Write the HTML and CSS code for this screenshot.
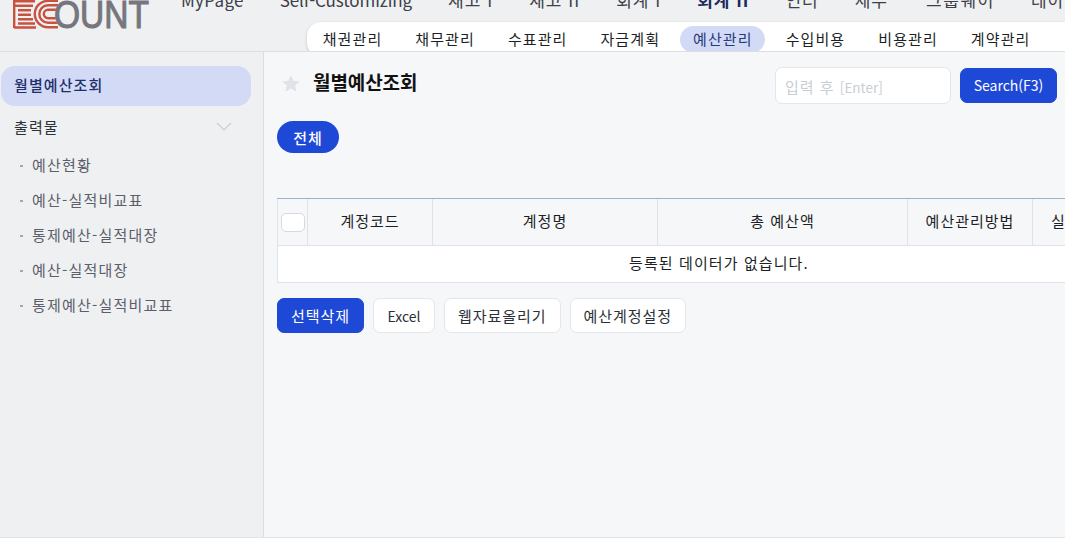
FILE: index.html
```html
<!DOCTYPE html>
<html lang="ko">
<head>
<meta charset="utf-8">
<title>월별예산조회</title>
<link rel="stylesheet" href="styles.css">
</head>
<body>
<div class="page">
  <header class="header">
    <svg class="logo" width="150" height="29" viewBox="0 0 150 29" aria-label="ECOUNT">
      <g fill="none" stroke="#c9523f" stroke-width="2.4">
        <path d="M14.2 28V0"/>
        <path d="M14 1.2H35M14 5.7H33M18 10.2H31M18 14.7H31M18 19.2H33M18 23.5H35M14 27.5H36"/>
        <path d="M58 27.2H48A13.2 13.2 0 0 1 48 0.8H58"/>
        <path d="M58 22.7H48A8.7 8.7 0 0 1 48 5.3H58"/>
        <path d="M58 18.2H48A4.2 4.2 0 0 1 48 9.8H58"/>
      </g>
      <text class="logo-text" x="54" y="28" textLength="95" lengthAdjust="spacingAndGlyphs">OUNT</text>
    </svg>
    <div class="nav-area">
      <nav class="main-nav">
        <span class="mypage">MyPage</span><span class="custom">Self-Customizing</span><span class="ko">재고 I</span><span class="ko">재고 II</span><span class="ko">회계 I</span><span class="ko on">회계 II</span><span class="ko">인터</span><span class="ko">세무</span><span class="ko wide">그룹웨어</span><span class="ko">데이터</span>
      </nav>
      <nav class="sub-nav">
        <span class="sub">채권관리</span><span class="sub">채무관리</span><span class="sub">수표관리</span><span class="sub">자금계획</span><span class="sub active">예산관리</span><span class="sub">수입비용</span><span class="sub">비용관리</span><span class="sub">계약관리</span><span class="sub">부가세</span>
      </nav>
    </div>
  </header>
  <div class="body">
    <aside class="side">
      <div class="side-active">월별예산조회</div>
      <div class="side-group"><span>출력물</span>
        <svg width="16" height="9" viewBox="0 0 16 9"><path d="M1 1l7 7 7-7" fill="none" stroke="#c9ced6" stroke-width="1.2"/></svg>
      </div>
      <ul class="side-list">
        <li>예산현황</li>
        <li>예산-실적비교표</li>
        <li>통제예산-실적대장</li>
        <li>예산-실적대장</li>
        <li>통제예산-실적비교표</li>
      </ul>
    </aside>
    <main class="main">
      <div class="title-row">
        <svg class="star" width="18" height="17" viewBox="0 0 18 17"><path d="M9 0l2.6 5.7 6.2.7-4.6 4.2 1.3 6.1L9 13.6l-5.5 3.1 1.3-6.1L.2 6.4l6.2-.7z" fill="#dfe2e7"/></svg>
        <h1 class="title">월별예산조회</h1>
        <div class="search">
          <div class="search-input">입력 후 <span class="hint">[Enter]</span></div>
          <button class="btn primary search-btn">Search(F3)</button>
        </div>
      </div>
      <button class="pill">전체</button>
      <div class="table">
        <div class="row head">
          <div class="cell c0"><span class="check"></span></div>
          <div class="cell c1">계정코드</div>
          <div class="cell c2">계정명</div>
          <div class="cell c3">총 예산액</div>
          <div class="cell c4">예산관리방법</div>
          <div class="cell c5">실적</div>
        </div>
        <div class="empty">등록된 데이터가 없습니다.</div>
      </div>
      <div class="actions">
        <button class="btn primary">선택삭제</button>
        <button class="btn latin">Excel</button>
        <button class="btn">웹자료올리기</button>
        <button class="btn">예산계정설정</button>
      </div>
    </main>
  </div>
</div>
</body>
</html>
```
FILE: styles.css
```css
* { box-sizing: border-box; }
html, body { margin: 0; height: 100%; overflow: hidden; background: #f6f7f9; }
body, button { font-family: "Noto Sans CJK KR", "Noto Sans", sans-serif; font-size: 15px; color: #1c1f26; }
.page { width: 1065px; height: 538px; display: flex; flex-direction: column; border-bottom: 1px solid #dfe2e7; }
.header { height: 52px; flex: none; display: flex; background: #eff0f2; border-bottom: 1px solid #dcdee2; overflow: hidden; }
.logo { flex: none; }
.logo-text { font-family: "Liberation Sans", sans-serif; font-size: 39px; fill: #77757d; stroke: #77757d; stroke-width: 1.1; }
.nav-area { flex: 1; min-width: 0; }
.main-nav { height: 22px; display: flex; gap: 36px; margin-top: -12px; padding-left: 31px; white-space: nowrap; font-size: 17px; line-height: 24px; color: #3c4048; }
.main-nav span { flex: none; }
.main-nav .mypage { letter-spacing: .3px; }
.main-nav .custom { letter-spacing: -.1px; }
.main-nav .ko { letter-spacing: 1px; }
.main-nav .on { font-weight: 700; color: #1c2a5c; }
.main-nav .wide { letter-spacing: 1.6px; margin-left: 2px; }
.sub-nav { margin: 12px 0 0 157px; height: 35px; display: flex; align-items: center; padding-left: 3px; gap: 7.6px; background: #fff; border-radius: 14px 0 0 14px; box-shadow: 0 1px 3px rgba(0,0,0,.2); white-space: nowrap; }
.sub { flex: none; width: 85px; height: 27px; line-height: 25px; text-align: center; border-radius: 14px; letter-spacing: 1.1px; }
.sub.active { background: #d3daf6; color: #273a7c; }
.body { flex: 1; display: flex; min-height: 0; }
.side { width: 264px; flex: none; background: #eff0f2; border-right: 1px solid #dcdee2; padding: 14px 12px 0 1px; }
.side-active { height: 40px; line-height: 37px; padding-left: 13px; background: #d3daf6; border-radius: 14px; color: #1f2f6d; font-weight: 500; letter-spacing: 1.1px; }
.side-group { display: flex; justify-content: space-between; align-items: center; height: 35px; margin-top: 3px; padding: 0 19px 0 13px; letter-spacing: 1.1px; color: #2c3038; }
.side-list { list-style: none; margin: 4px 0 0; padding: 0 0 0 31px; color: #5a5f6a; letter-spacing: 1.2px; }
.side-list li { height: 35px; line-height: 33px; position: relative; }
.side-list li::before { content: ""; position: absolute; left: -12px; top: 17px; width: 3px; height: 2px; background: #a5a8b0; }
.main { flex: 1; min-width: 0; padding: 0 0 0 13px; overflow: hidden; }
.title-row { display: flex; align-items: center; height: 38px; margin-top: 15px; padding: 0 8px 0 5px; }
.star { flex: none; margin-top: -6px; }
.title { margin: -8px 0 0 13px; font-size: 19px; font-weight: 700; color: #111; line-height: 32px; letter-spacing: -.1px; }
.search { margin-left: auto; margin-top: -2px; display: flex; gap: 9px; align-items: center; }
.search-input { width: 176px; height: 37px; line-height: 37px; padding-left: 9px; background: #fff; border: 1px solid #e3e6ea; border-radius: 7px; color: #c9ced4; letter-spacing: 1px; }
.hint { font-size: 13.5px; letter-spacing: 0; }
.btn { height: 35px; padding: 0 13px; border: 1px solid #e3e6ea; border-radius: 7px; background: #fff; color: #2c3038; cursor: pointer; letter-spacing: .95px; }
.btn.latin { font-size: 14px; letter-spacing: 0; padding: 0 13.5px; }
.btn.primary { background: #1e48d6; border-color: #1e48d6; color: #fff; }
.search-btn { width: 97px; padding: 0; letter-spacing: 0; font-size: 14px; }
.pill { display: block; margin-top: 16px; width: 62px; height: 32px; border: 0; border-radius: 16px; background: #1e48d6; color: #fff; font-weight: 500; letter-spacing: .95px; padding: 0; }
.table { margin-top: 45px; width: 820px; border-top: 1px solid #9fb1c8; }
.row { display: flex; height: 47px; border-bottom: 1px solid #dfe2e7; }
.cell { flex: none; display: flex; align-items: center; justify-content: center; border-left: 1px solid #dfe2e7; letter-spacing: 1px; padding-bottom: 3px; white-space: nowrap; }
.c0 { width: 30px; } .c1 { width: 125px; } .c2 { width: 225px; } .c3 { width: 250px; } .c4 { width: 125px; } .c5 { width: 65px; justify-content: flex-start; padding-left: 18px; }
.check { width: 24px; height: 19px; background: #fff; border: 1px solid #d6d9de; border-radius: 5px; margin-top: 3px; }
.empty { height: 37px; line-height: 34px; background: #fff; border: solid #dfe2e7; border-width: 0 0 1px 1px; padding-left: 351px; letter-spacing: 1.1px; white-space: nowrap; }
.actions { display: flex; gap: 9px; margin-top: 15px; }
```
